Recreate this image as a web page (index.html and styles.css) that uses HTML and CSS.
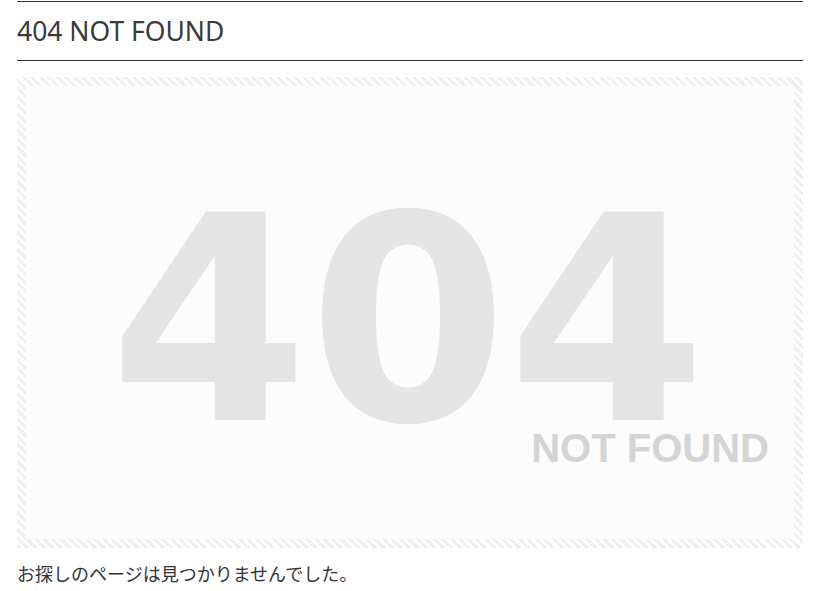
FILE: index.html
```html
<!DOCTYPE html>
<html lang="ja">
<head>
<meta charset="utf-8">
<title>404 NOT FOUND</title>
<link rel="stylesheet" href="styles.css">
</head>
<body>
<main class="page">
  <h1 class="title">404 NOT FOUND</h1>
  <div class="frame">
    <div class="inner">
      <svg class="art" width="768" height="453" viewBox="0 0 768 453" xmlns="http://www.w3.org/2000/svg">
        <text class="big" x="382" y="334" text-anchor="middle">404</text>
        <text class="small" x="743" y="376" text-anchor="end">NOT FOUND</text>
      </svg>
    </div>
  </div>
  <p class="message">お探しのページは見つかりませんでした。</p>
</main>
</body>
</html>
```
FILE: styles.css
```css
html, body {
  margin: 0;
  padding: 0;
  background: #ffffff;
}
.page {
  width: 786px;
  margin: 0 0 0 17px;
  padding-top: 1px;
  color: #333333;
  font-family: "Noto Sans", "Noto Sans CJK JP", sans-serif;
}
.title {
  margin: 0;
  border-top: 1px solid #333333;
  border-bottom: 1px solid #333333;
  padding: 11px 0 10px;
  font-size: 26.5px;
  line-height: 37px;
  font-weight: 400;
  color: #3a3a3a;
}
.frame {
  margin-top: 16px;
  padding: 9px;
  background: repeating-linear-gradient(45deg, #efefef 0, #efefef 3px, #ffffff 3px, #ffffff 6px);
}
.inner {
  background: #fcfcfc;
  height: 453px;
}
.art {
  display: block;
}
.big {
  font-family: "DejaVu Sans", sans-serif;
  font-weight: 700;
  font-size: 286px;
  fill: #e4e4e4;
}
.small {
  font-family: "Liberation Sans", sans-serif;
  font-weight: 700;
  font-size: 40px;
  fill: #d4d4d4;
}
.message {
  margin: 12px 0 0;
  font-family: "Noto Sans CJK JP", sans-serif;
  font-size: 18px;
  line-height: 26px;
  color: #333333;
}
```
